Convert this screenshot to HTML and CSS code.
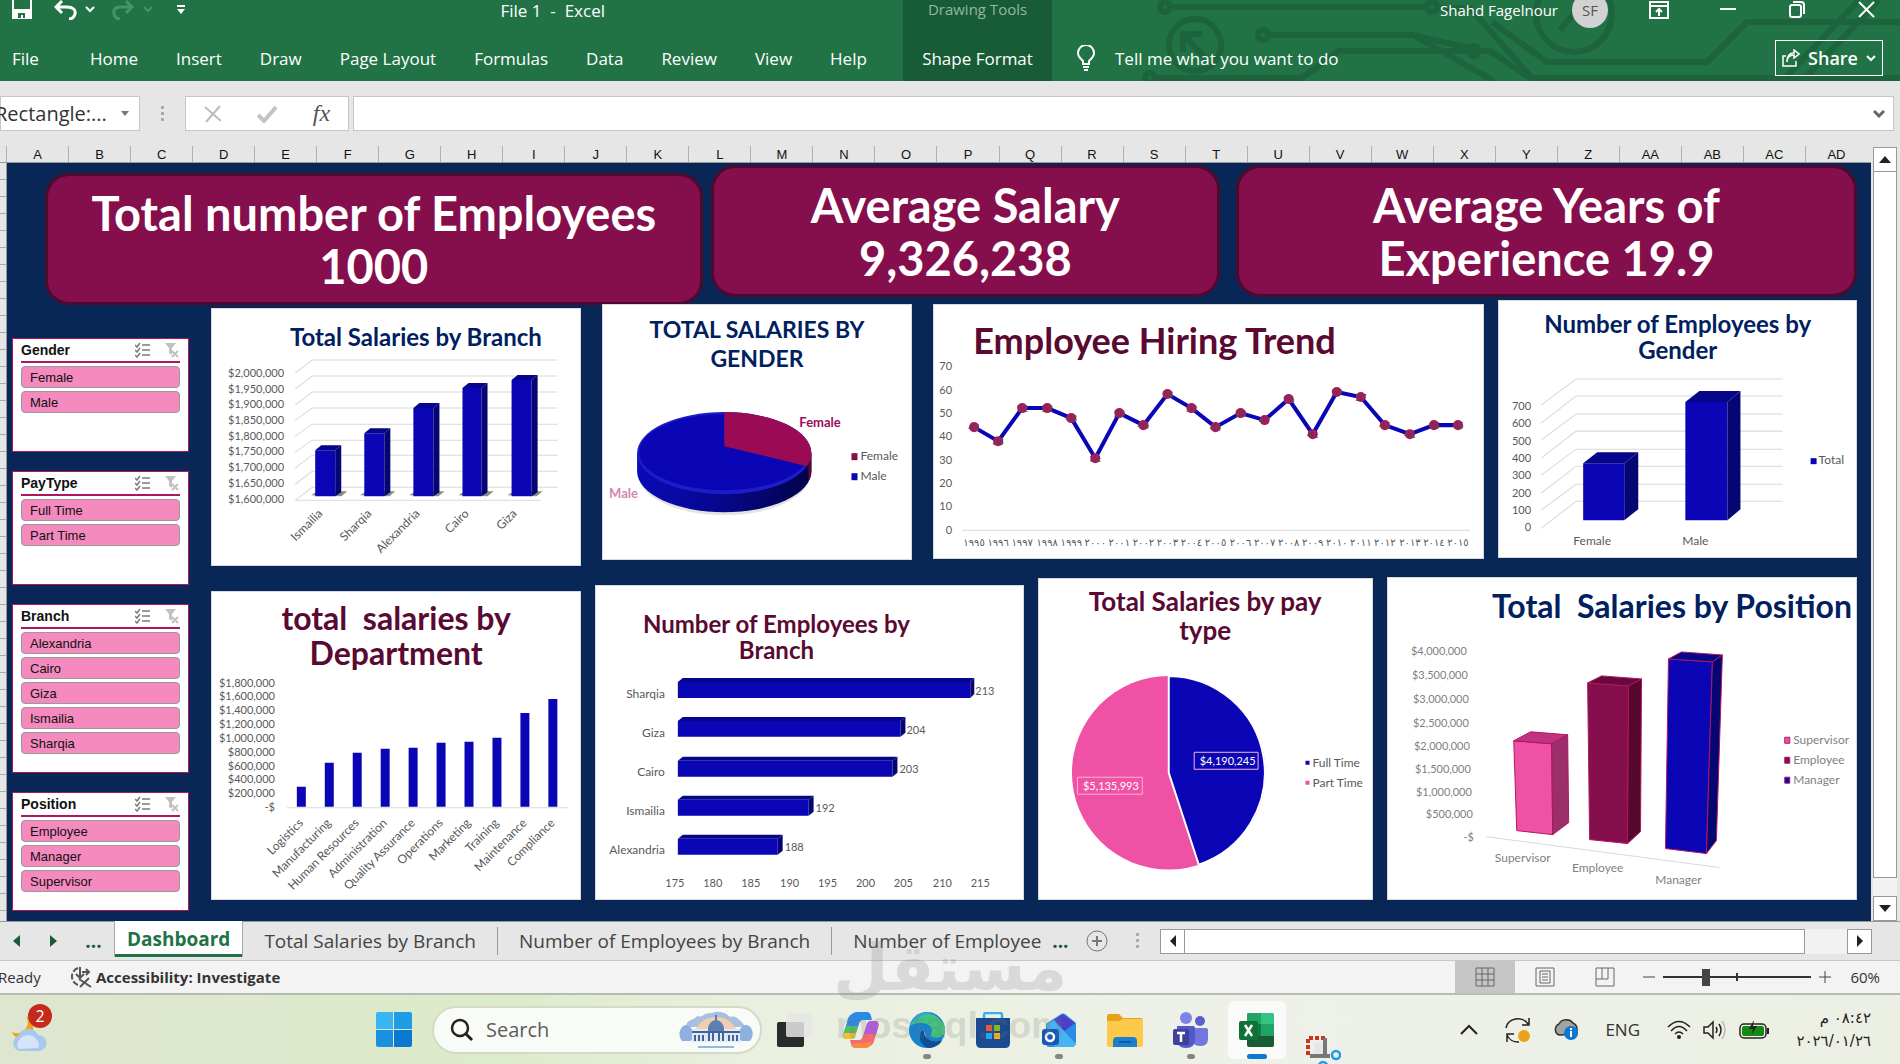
FILE: index.html
```html
<!DOCTYPE html>
<html lang="en">
<head>
<meta charset="UTF-8" />
<meta name="viewport" content="width=device-width, initial-scale=1" />
<title>File 1 - Excel</title>
<link rel="stylesheet" href="styles.css">
</head>
<body>

<!-- Title bar and ribbon tabs -->
<header class="ribbon">
  <div class="ribbon-left">
    <div class="title-row">
      <div class="quick">
        <button aria-label="Save"><svg width="20" height="20" viewBox="0 0 20 20"><path d="M1 0V18H19V0M1 10H19" fill="none" stroke="#fff" stroke-width="2"/><path d="M1 11H19V18H1Z" fill="#fff"/><path d="M6 13H13V18H11V15H9V18H6Z" fill="#217346"/></svg></button>
        <button class="undo" aria-label="Undo"><svg width="42" height="20" viewBox="0 0 42 20"><path d="M8 1L2 7L8 13M2 7H13C19 7 22 10 21 14C20 17 18 19 15 19" fill="none" stroke="#fff" stroke-width="3"/><path d="M32 7L36 11L40 7" fill="none" stroke="#fff" stroke-width="2"/></svg></button>
        <button class="redo" aria-label="Redo"><svg width="42" height="20" viewBox="0 0 42 20"><path d="M14 1L20 7L14 13M20 7H9C3 7 1 10 2 14C3 17 5 19 8 19" fill="none" stroke="#439467" stroke-width="3"/><path d="M32 7L36 11L40 7" fill="none" stroke="#439467" stroke-width="2"/></svg></button>
        <button class="more" aria-label="Customize Quick Access Toolbar"><svg width="10" height="10" viewBox="0 0 10 10"><path d="M1 1H9" stroke="#fff" stroke-width="2"/><path d="M1 4H9L5 9Z" fill="#fff"/></svg></button>
      </div>
      <span class="doc-title">File 1 &nbsp;- &nbsp;Excel</span>
    </div>
    <nav class="tabs">
      <button class="file">File</button>
      <button>Home</button>
      <button>Insert</button>
      <button>Draw</button>
      <button>Page Layout</button>
      <button>Formulas</button>
      <button>Data</button>
      <button>Review</button>
      <button>View</button>
      <button>Help</button>
    </nav>
  </div>
  <div class="ribbon-context">
    <span>Drawing Tools</span>
    <button>Shape Format</button>
  </div>
  <div class="ribbon-right">
    <svg class="circuit" viewBox="0 0 848 81" preserveAspectRatio="xMaxYMin slice">
      <g fill="none" stroke="#1d633b" stroke-width="6">
        <circle cx="113" cy="7" r="5"/><path d="M118 7H375"/><circle cx="380" cy="7" r="5"/>
        <path d="M385 8H418L480 78H848"/>
        <circle cx="211" cy="35" r="5"/><path d="M216 35H361L442 81M361 35L425 50"/>
        <path d="M440 22L495 62H655L695 22H848"/>
        <circle cx="98" cy="78" r="5"/><path d="M103 78H250L287 51H416"/><circle cx="422" cy="51" r="5"/><path d="M428 51H438L478 78"/>
        <path d="M730 81L807 0M750 81L827 0"/>
        <circle cx="143" cy="45" r="26"/><path d="M153 58L133 36M131 52V34H150"/>
        <circle cx="522" cy="14" r="38"/><path d="M508 30L540 -8"/>
      </g>
    </svg>
    <div class="title-row account">
      <span>Shahd Fagelnour</span>
      <span class="avatar">SF</span>
      <button aria-label="Ribbon Display Options"><svg width="20" height="18" viewBox="0 0 20 18"><path d="M1 1H19V17H1ZM1 5H19M10 15V8M7 11L10 8L13 11" fill="none" stroke="#fff" stroke-width="2"/></svg></button>
      <button aria-label="Minimize"><svg width="20" height="18" viewBox="0 0 20 18"><path d="M2 8H18" stroke="#fff" stroke-width="2"/></svg></button>
      <button aria-label="Restore Down"><svg width="20" height="18" viewBox="0 0 20 18"><path d="M3 6Q3 4 5 4H12Q14 4 14 6V14Q14 16 12 16H5Q3 16 3 14ZM6 1H14Q17 1 17 4V13" fill="none" stroke="#fff" stroke-width="2"/></svg></button>
      <button aria-label="Close"><svg width="20" height="18" viewBox="0 0 20 18"><path d="M3 1L18 16M18 1L3 16" stroke="#fff" stroke-width="2"/></svg></button>
    </div>
    <div class="tell-row">
      <button class="tell"><svg width="18" height="26" viewBox="0 0 18 26"><path d="M6 19V16C4 14 1 12 1 8A8 8 0 0 1 17 8C17 12 14 14 12 16V19ZM6 22H12M7 25H11" fill="none" stroke="#fff" stroke-width="2"/></svg>Tell me what you want to do</button>
      <button class="share"><svg width="18" height="18" viewBox="0 0 18 18"><path d="M4 7H1V17H14V12M5 13C5 8 8 6 12 6V9L17 5L12 1V4C7 4 5 8 5 13Z" fill="none" stroke="#fff" stroke-width="1.5"/></svg>Share<svg width="10" height="8" viewBox="0 0 10 8"><path d="M1 2L5 6L9 2" fill="none" stroke="#fff" stroke-width="2"/></svg></button>
    </div>
  </div>
</header>

<!-- Formula bar -->
<div class="formula-bar">
  <div class="name-box">
    <input type="text" aria-label="Name Box" value="Rectangle:...">
    <svg width="8" height="6" viewBox="0 0 8 6"><path d="M0 0H8L4 5Z" fill="#777"/></svg>
  </div>
  <span class="dots"></span>
  <div class="fx-box">
    <button aria-label="Cancel"><svg width="18" height="18" viewBox="0 0 18 18"><path d="M1 2L17 16M16 1L2 17" stroke="#bcbcbc" stroke-width="2"/></svg></button>
    <button aria-label="Enter"><svg width="20" height="18" viewBox="0 0 20 18"><path d="M1 10L7 16L19 2" fill="none" stroke="#c4c4c4" stroke-width="4"/></svg></button>
    <button class="fx" aria-label="Insert Function">fx</button>
  </div>
  <div class="formula-box">
    <input type="text" aria-label="Formula">
    <svg width="12" height="8" viewBox="0 0 12 8"><path d="M1 1L6 6L11 1" fill="none" stroke="#666" stroke-width="3"/></svg>
  </div>
</div>

<!-- Worksheet -->
<main class="sheet">
  <div class="grid-area">
    <div class="columns">
      <span>A</span><span>B</span><span>C</span><span>D</span><span>E</span><span>F</span><span>G</span><span>H</span><span>I</span><span>J</span><span>K</span><span>L</span><span>M</span><span>N</span><span>O</span><span>P</span><span>Q</span><span>R</span><span>S</span><span>T</span><span>U</span><span>V</span><span>W</span><span>X</span><span>Y</span><span>Z</span><span>AA</span><span>AB</span><span>AC</span><span>AD</span>
    </div>
    <div class="rows-and-canvas">
      <div class="row-gutter"></div>
      <div class="canvas">
        <div class="kpis">
          <div class="kpi kpi-employees">Total number of Employees<br>1000</div>
          <div class="kpi kpi-salary">Average Salary<br>9,326,238</div>
          <div class="kpi kpi-years">Average Years of<br>Experience 19.9</div>
        </div>

        <div class="board">
          <aside class="slicers">
            <section class="slicer roomy">
              <header><h3>Gender</h3><button aria-label="Multi-Select"><svg class="ic-multi" viewBox="0 0 16 16"><use href="#multi"/></svg></button><button aria-label="Clear Filter"><svg class="ic-clear" viewBox="0 0 16 16"><use href="#clear"/></svg></button></header>
              <button>Female</button>
              <button>Male</button>
            </section>
            <section class="slicer roomy">
              <header><h3>PayType</h3><button aria-label="Multi-Select"><svg class="ic-multi" viewBox="0 0 16 16"><use href="#multi"/></svg></button><button aria-label="Clear Filter"><svg class="ic-clear" viewBox="0 0 16 16"><use href="#clear"/></svg></button></header>
              <button>Full Time</button>
              <button>Part Time</button>
            </section>
            <section class="slicer">
              <header><h3>Branch</h3><button aria-label="Multi-Select"><svg class="ic-multi" viewBox="0 0 16 16"><use href="#multi"/></svg></button><button aria-label="Clear Filter"><svg class="ic-clear" viewBox="0 0 16 16"><use href="#clear"/></svg></button></header>
              <button>Alexandria</button>
              <button>Cairo</button>
              <button>Giza</button>
              <button>Ismailia</button>
              <button>Sharqia</button>
            </section>
            <section class="slicer">
              <header><h3>Position</h3><button aria-label="Multi-Select"><svg class="ic-multi" viewBox="0 0 16 16"><use href="#multi"/></svg></button><button aria-label="Clear Filter"><svg class="ic-clear" viewBox="0 0 16 16"><use href="#clear"/></svg></button></header>
              <button>Employee</button>
              <button>Manager</button>
              <button>Supervisor</button>
            </section>
          </aside>

          <div class="charts">
            <div class="chart-row top">
              <section class="card c-branch">
                <h2 class="navy">Total Salaries by Branch</h2>
                <svg viewBox="0 0 369 216">
                  <path class="grid" d="M84 23L101 10H346M84 39L101 26H346M84 55L101 42H346M84 70L101 58H346M84 86L101 74H346M84 102L101 90H346M84 118L101 105H346M84 134L101 121H346M84 150L101 137H346M84 150H329"/>
                  <g class="end num"><text x="73" y="27">$2,000,000</text><text x="73" y="43">$1,950,000</text><text x="73" y="58">$1,900,000</text><text x="73" y="74">$1,850,000</text><text x="73" y="90">$1,800,000</text><text x="73" y="105">$1,750,000</text><text x="73" y="121">$1,700,000</text><text x="73" y="137">$1,650,000</text><text x="73" y="153">$1,600,000</text></g>
                  <path fill="#8a8a80" d="M100 145L106 141H136L130 146ZM149 145L155 141H184L178 146ZM198 145L204 141H233L227 146ZM247 145L253 141H282L276 146ZM296 145L302 141H331L325 146Z"/>
                  <path class="bar" d="M104 100H124V146H104ZM153 83H173V146H153ZM202 58H222V146H202ZM251 38H270V146H251ZM300 30H320V146H300Z"/>
                  <path class="lid" d="M104 100L110 95H130L124 100ZM153 83L159 78H179L173 83ZM202 58L208 53H228L222 58ZM251 38L257 33H276L270 38ZM300 30L306 25H326L320 30Z"/>
                  <path class="side" d="M124 100L130 95V142L124 146ZM173 83L179 78V142L173 146ZM222 58L228 53V142L222 146ZM270 38L276 33V142L270 146ZM320 30L326 25V142L320 146Z"/>
                  <g class="end tilt"><text transform="translate(112 164) rotate(-45)">Ismailia</text><text transform="translate(161 164) rotate(-45)">Sharqia</text><text transform="translate(209 164) rotate(-45)">Alexandria</text><text transform="translate(258 164) rotate(-45)">Cairo</text><text transform="translate(306 164) rotate(-45)">Giza</text></g>
                </svg>
              </section>

              <section class="card c-gender-pie">
                <h2 class="navy">TOTAL SALARIES BY<br>GENDER</h2>
                <svg viewBox="0 0 310 187">
                  <defs><linearGradient id="rim"><stop offset="0" stop-color="#0a0ab8"/><stop offset=".5" stop-color="#07078a"/><stop offset="1" stop-color="#020248"/></linearGradient></defs>
                  <ellipse cx="122" cy="101" rx="86" ry="41" fill="#e4e4e4"/>
                  <path fill="url(#rim)" d="M35 80V98A87 41 0 0 0 209 98V80Z"/>
                  <path fill="#5f0736" d="M209 80V98Q209 104 206 108V92Z"/>
                  <ellipse cx="122" cy="80" rx="87" ry="41" fill="#1c1cc8"/>
                  <ellipse cx="122" cy="79" rx="85" ry="38" fill="#0a06b5"/>
                  <path fill="#9b0b55" d="M122 73V39A87 41 0 0 1 209 80Q209 87 204 93Z"/>
                  <text x="197" y="54" class="strong">Female</text>
                  <text x="7" y="125" class="strong faded">Male</text>
                  <path fill="#850e4c" d="M249 80H255V87H249Z"/><text x="258" y="87">Female</text>
                  <path fill="#0a06b5" d="M249 100H255V107H249Z"/><text x="258" y="107">Male</text>
                </svg>
              </section>

              <section class="card c-trend">
                <h2 class="plum">Employee Hiring Trend</h2>
                <svg viewBox="0 0 550 199">
                  <g class="end num"><text x="19" y="10">70</text><text x="19" y="34">60</text><text x="19" y="57">50</text><text x="19" y="80">40</text><text x="19" y="104">30</text><text x="19" y="127">20</text><text x="19" y="150">10</text><text x="19" y="174">0</text></g>
                  <path class="grid" d="M29 170H536"/>
                  <polyline fill="none" stroke="#0a06b5" stroke-width="4" points="41,67 65,81 89,48 114,48 138,58 162,98 186,53 210,65 234,34 258,48 282,67 307,53 331,60 355,39 379,74 403,32 427,37 451,65 476,74 500,65 524,65"/>
                  <g fill="#b01560"><circle cx="41" cy="67" r="5"/><circle cx="65" cy="81" r="5"/><circle cx="89" cy="48" r="5"/><circle cx="114" cy="48" r="5"/><circle cx="138" cy="58" r="5"/><circle cx="162" cy="98" r="5"/><circle cx="186" cy="53" r="5"/><circle cx="210" cy="65" r="5"/><circle cx="234" cy="34" r="5"/><circle cx="258" cy="48" r="5"/><circle cx="282" cy="67" r="5"/><circle cx="307" cy="53" r="5"/><circle cx="331" cy="60" r="5"/><circle cx="355" cy="39" r="5"/><circle cx="379" cy="74" r="5"/><circle cx="403" cy="32" r="5"/><circle cx="427" cy="37" r="5"/><circle cx="451" cy="65" r="5"/><circle cx="476" cy="74" r="5"/><circle cx="500" cy="65" r="5"/><circle cx="524" cy="65" r="5"/></g>
                  <g class="mid point"><text x="41" y="71">44</text><text x="65" y="85">38</text><text x="89" y="52">52</text><text x="114" y="52">52</text><text x="138" y="62">48</text><text x="162" y="102">31</text><text x="186" y="57">50</text><text x="210" y="69">45</text><text x="234" y="38">58</text><text x="258" y="52">52</text><text x="282" y="71">44</text><text x="307" y="57">50</text><text x="331" y="64">47</text><text x="355" y="43">56</text><text x="379" y="78">41</text><text x="403" y="36">59</text><text x="427" y="41">57</text><text x="451" y="69">45</text><text x="476" y="78">41</text><text x="500" y="69">45</text><text x="524" y="69">45</text></g>
                  <g class="mid years"><text x="41" y="186">١٩٩٥</text><text x="65" y="186">١٩٩٦</text><text x="89" y="186">١٩٩٧</text><text x="114" y="186">١٩٩٨</text><text x="138" y="186">١٩٩٩</text><text x="162" y="186">٢٠٠٠</text><text x="186" y="186">٢٠٠١</text><text x="210" y="186">٢٠٠٢</text><text x="234" y="186">٢٠٠٣</text><text x="258" y="186">٢٠٠٤</text><text x="282" y="186">٢٠٠٥</text><text x="307" y="186">٢٠٠٦</text><text x="331" y="186">٢٠٠٧</text><text x="355" y="186">٢٠٠٨</text><text x="379" y="186">٢٠٠٩</text><text x="403" y="186">٢٠١٠</text><text x="427" y="186">٢٠١١</text><text x="451" y="186">٢٠١٢</text><text x="476" y="186">٢٠١٣</text><text x="500" y="186">٢٠١٤</text><text x="524" y="186">٢٠١٥</text></g>
                </svg>
              </section>

              <section class="card c-gender-count">
                <h2 class="navy">Number of Employees by<br>Gender</h2>
                <svg viewBox="0 0 358 195">
                  <path class="grid" d="M43 42L78 16H284M43 60L78 33H284M43 77L78 51H284M43 95L78 68H284M43 112L78 86H284M43 130L78 103H284M43 147L78 121H284M43 165L78 138H284"/>
                  <g class="end num"><text x="33" y="47">700</text><text x="33" y="64">600</text><text x="33" y="82">500</text><text x="33" y="99">400</text><text x="33" y="116">300</text><text x="33" y="134">200</text><text x="33" y="151">100</text><text x="33" y="168">0</text></g>
                  <path class="bar" d="M85 100H126V157H85ZM187 39H229V157H187Z"/>
                  <path class="lid" d="M85 100L99 89H140L126 100ZM187 39L201 28H242L229 39Z"/>
                  <path class="side" d="M126 100L140 89V146L126 157ZM229 39L242 28V146L229 157Z"/>
                  <g class="mid"><text x="94" y="182">Female</text><text x="197" y="182">Male</text></g>
                  <path class="bar" d="M312 95H318V101H312Z"/><text x="320" y="101">Total</text>
                </svg>
              </section>
            </div>

            <div class="chart-row bottom">
              <section class="card c-department">
                <h2 class="plum">total &nbsp;salaries by<br>Department</h2>
                <svg viewBox="0 0 371 230">
                  <g class="end num"><text x="64" y="17">$1,800,000</text><text x="64" y="30">$1,600,000</text><text x="64" y="44">$1,400,000</text><text x="64" y="58">$1,200,000</text><text x="64" y="72">$1,000,000</text><text x="64" y="86">$800,000</text><text x="64" y="100">$600,000</text><text x="64" y="113">$400,000</text><text x="64" y="127">$200,000</text><text x="64" y="141">-$</text></g>
                  <path class="grid" d="M76 138H357"/>
                  <path class="bar" d="M86 117h9V137h-9ZM114 93h9V137h-9ZM142 83h9V137h-9ZM170 79h9V137h-9ZM198 78h9V137h-9ZM226 73h9V137h-9ZM254 72h9V137h-9ZM282 68h9V137h-9ZM310 43h9V137h-9ZM338 29h9V137h-9Z"/>
                  <g class="end tilt"><text transform="translate(93 154) rotate(-45)">Logistics</text><text transform="translate(121 154) rotate(-45)">Manufacturing</text><text transform="translate(149 154) rotate(-45)">Human Resources</text><text transform="translate(177 154) rotate(-45)">Administration</text><text transform="translate(205 154) rotate(-45)">Quality Assurance</text><text transform="translate(233 154) rotate(-45)">Operations</text><text transform="translate(261 154) rotate(-45)">Marketing</text><text transform="translate(289 154) rotate(-45)">Training</text><text transform="translate(317 154) rotate(-45)">Maintenance</text><text transform="translate(345 154) rotate(-45)">Compliance</text></g>
                </svg>
              </section>

              <section class="card c-branch-count">
                <h2 class="plum">Number of Employees by<br>Branch</h2>
                <svg viewBox="0 0 429 237">
                  <g class="end"><text x="70" y="35">Sharqia</text><text x="70" y="74">Giza</text><text x="70" y="113">Cairo</text><text x="70" y="152">Ismailia</text><text x="70" y="191">Alexandria</text></g>
                  <path class="bar" d="M83 19H376V35H83ZM83 58H306V74H83ZM83 98H298V114H83ZM83 137H214V153H83ZM83 176H183V192H83Z"/>
                  <path class="lid" d="M83 19L88 15H380L376 19ZM83 58L88 54H311L306 58ZM83 98L88 94H303L298 98ZM83 137L88 133H219L214 137ZM83 176L88 172H188L183 176Z"/>
                  <path class="side" d="M376 19L380 15V31L376 35ZM306 58L311 54V70L306 74ZM298 98L303 94V110L298 114ZM214 137L219 133V149L214 153ZM183 176L188 172V188L183 192Z"/>
                  <g class="num"><text x="381" y="32">213</text><text x="312" y="71">204</text><text x="305" y="110">203</text><text x="221" y="149">192</text><text x="190" y="188">188</text></g>
                  <g class="mid num"><text x="80" y="224">175</text><text x="118" y="224">180</text><text x="156" y="224">185</text><text x="195" y="224">190</text><text x="233" y="224">195</text><text x="271" y="224">200</text><text x="309" y="224">205</text><text x="348" y="224">210</text><text x="386" y="224">215</text></g>
                </svg>
              </section>

              <section class="card c-paytype">
                <h2 class="plum">Total Salaries by pay<br>type</h2>
                <svg viewBox="0 0 336 255">
                  <circle cx="131" cy="128" r="97" fill="#ef52a4"/>
                  <path fill="#0a06b5" stroke="#fff" stroke-width="2" d="M131 128V31A97 97 0 0 1 161 220Z"/>
                  <path fill="none" stroke="#f7b4d8" d="M156.5 107.5H220.5V124.5H156.5ZM39.500 132.500H104.500V149.500H39.500Z"/>
                  <g class="mid num white"><text x="190" y="120">$4,190,245</text><text x="73" y="145">$5,135,993</text></g>
                  <path fill="#0a06b5" d="M268 116H272V120H268Z"/><text x="275" y="122">Full Time</text>
                  <path fill="#ef52a4" d="M268 136H272V140H268Z"/><text x="275" y="142">Part Time</text>
                </svg>
              </section>

              <section class="card c-position">
                <h2 class="navy">Total &nbsp;Salaries by Position</h2>
                <svg viewBox="0 0 471 276" class="soft">
                  <g class="end num"><text x="80" y="31">$4,000,000</text><text x="81" y="55">$3,500,000</text><text x="82" y="79">$3,000,000</text><text x="82" y="103">$2,500,000</text><text x="83" y="126">$2,000,000</text><text x="84" y="149">$1,500,000</text><text x="85" y="172">$1,000,000</text><text x="86" y="194">$500,000</text><text x="87" y="217">-$</text></g>
                  <path class="grid" d="M99 213L333 244"/>
                  <g stroke="#b01560" stroke-linejoin="round">
                    <path fill="#ef52a4" d="M127 117L165 120L166 211L130 207Z"/><path fill="#c2337f" d="M127 117L144 108L181 111L165 120Z"/><path fill="#9c2f6b" d="M165 120L181 111L182 199L166 211Z"/>
                    <path fill="#850e4c" d="M201 59L242 62L241 220L203 216Z"/><path fill="#650a3a" d="M201 59L215 52L255 55L242 62Z"/><path fill="#56082f" d="M242 62L255 55L254 208L241 220Z"/>
                    <path fill="#0a06b5" d="M282 35L326 38L320 230L279 225Z"/><path fill="#06068a" d="M282 35L295 28L336 31L326 38Z"/><path fill="#050573" d="M326 38L336 31L330 217L320 230Z"/>
                  </g>
                  <g class="mid"><text x="136" y="238">Supervisor</text><text x="211" y="248">Employee</text><text x="292" y="260">Manager</text></g>
                  <g stroke="#b01560"><path fill="#ef52a4" d="M398.500 113.500h5v6h-5Z"/><path fill="#850e4c" d="M398.500 133.500h5v6h-5Z"/><path fill="#0a06b5" d="M398.500 153.500h5v6h-5Z"/></g>
                  <text x="407" y="120">Supervisor</text><text x="407" y="140">Employee</text><text x="407" y="160">Manager</text>
                </svg>
              </section>
            </div>
          </div>
        </div>
      </div>
    </div>
  </div>
  <div class="vscroll">
    <button aria-label="Scroll up"><svg width="12" height="7" viewBox="0 0 12 7"><path d="M0 7L6 0L12 7Z" fill="#222"/></svg></button>
    <div class="vthumb"></div>
    <div class="vtrack"></div>
    <button aria-label="Scroll down"><svg width="12" height="7" viewBox="0 0 12 7"><path d="M0 0L6 7L12 0Z" fill="#222"/></svg></button>
  </div>
</main>

<!-- Sheet tabs -->
<div class="sheet-tabs">
  <button class="arrow" aria-label="Previous sheet"><svg width="7" height="12" viewBox="0 0 7 12"><path d="M7 0L0 6L7 12Z" fill="#185c37"/></svg></button>
  <button class="arrow" aria-label="Next sheet"><svg width="7" height="12" viewBox="0 0 7 12"><path d="M0 0L7 6L0 12Z" fill="#185c37"/></svg></button>
  <button class="ellipsis">...</button>
  <button class="tab active">Dashboard</button>
  <button class="tab">Total Salaries by Branch</button>
  <button class="tab">Number of Employees by Branch</button>
  <button class="tab last">Number of Employee</button>
  <button class="ellipsis after">...</button>
  <button class="add" aria-label="New sheet"><svg width="22" height="22" viewBox="0 0 22 22"><path d="M11 6V16M6 11H16" stroke="#777" stroke-width="2"/><circle cx="11" cy="11" r="10" fill="none" stroke="#777"/></svg></button>
  <span class="dots"></span>
  <div class="hscroll">
    <button aria-label="Scroll left"><svg width="6" height="12" viewBox="0 0 6 12"><path d="M6 0L0 6L6 12Z" fill="#222"/></svg></button>
    <div class="hthumb"></div>
    <div class="htrack"></div>
    <button aria-label="Scroll right"><svg width="6" height="12" viewBox="0 0 6 12"><path d="M0 0L6 6L0 12Z" fill="#222"/></svg></button>
  </div>
</div>

<!-- Status bar -->
<div class="status">
  <span class="ready">Ready</span>
  <button class="access"><svg width="22" height="22" viewBox="0 0 22 22"><path d="M8 2A9 9 0 0 0 8 19" fill="none" stroke="#555" stroke-width="2" stroke-dasharray="6 2"/><path d="M10 1V11M6 8L10 12L14 8M12 6H19M16 3L19 6L16 9M9 13L21 21M19 12L10 21" fill="none" stroke="#555" stroke-width="2"/></svg>Accessibility: Investigate</button>
  <div class="views">
    <button class="on" aria-label="Normal"><svg width="20" height="20" viewBox="0 0 20 20"><path d="M1 1H19V19H1ZM1 7H19M1 13H19M7 1V19M13 1V19" fill="none" stroke="#666"/></svg></button>
    <button aria-label="Page Layout"><svg width="20" height="20" viewBox="0 0 20 20"><path d="M1 1H19V19H1ZM5 4H15V16H5ZM7 7H13M7 10H13M7 13H13" fill="none" stroke="#666"/></svg></button>
    <button aria-label="Page Break Preview"><svg width="20" height="20" viewBox="0 0 20 20"><path d="M1 1H19V19H1ZM1 12H13V1M7 1V12" fill="none" stroke="#666"/></svg></button>
  </div>
  <button class="zoom-step" aria-label="Zoom out"><svg width="12" height="12" viewBox="0 0 12 12"><path d="M0 6H12" stroke="#444"/></svg></button>
  <input class="zoom" type="range" aria-label="Zoom" min="10" max="190" value="60">
  <button class="zoom-step" aria-label="Zoom in"><svg width="12" height="12" viewBox="0 0 12 12"><path d="M0 6H12M6 0V12" stroke="#444"/></svg></button>
  <span class="percent">60%</span>
</div>

<!-- Taskbar -->
<footer class="taskbar">
  <button class="weather" aria-label="Weather">
    <svg width="38" height="44" viewBox="0 0 38 44"><path d="M16 8A11 11 0 0 1 2 24C4 30 12 33 19 29C26 24 24 12 16 8Z" fill="#f2a21c"/><path d="M9 43A8 8 0 0 1 8 28A11 11 0 0 1 28 27A8 8 0 0 1 29 43Z" fill="#a9c8ef"/><path d="M9 41A7 7 0 0 1 10 31A10 10 0 0 1 26 31A7 7 0 0 1 28 40Z" fill="#d5e4f8"/></svg>
    <span class="badge">2</span>
  </button>
  <div class="apps">
    <button aria-label="Start"><svg width="36" height="36" viewBox="0 0 36 36"><path d="M0 2Q0 0 2 0H17V17H0Z" fill="#38b6f3"/><path d="M18 0H34Q36 0 36 2V17H18Z" fill="#1f9ce8"/><path d="M0 18H17V35H2Q0 35 0 33Z" fill="#1a90e0"/><path d="M18 18H36V33Q36 35 34 35H18Z" fill="#0b78d2"/></svg></button>
    <label class="search">
      <svg width="24" height="24" viewBox="0 0 24 24"><circle cx="10" cy="10" r="8" fill="none" stroke="#222" stroke-width="2.500"/><path d="M16 16L22 22" stroke="#222" stroke-width="3"/></svg>
      <input type="text" placeholder="Search" aria-label="Search">
      <svg width="76" height="38" viewBox="0 0 76 38"><path d="M8 16C8 8 16 10 19 5C25 7 26 1 34 2C42-1 48 2 52 6C59 4 62 10 68 16Z" fill="#a9bfe0"/><path d="M17 24A21 18 0 0 1 59 24Z" fill="#f2cdb0"/><path d="M4 30C-2 22 4 14 8 14C13 14 18 22 13 30ZM63 30C58 22 63 14 68 14C73 14 78 22 72 30Z" fill="#8fb0de"/><path d="M14 18H62V31H14Z" fill="#dfe8f5"/><path d="M30 18A8 9 0 0 1 46 18V22H30ZM37 4H39V10H37Z" fill="#5b7fb5"/><path d="M14 21H62M17 24V30M21 24V30M25 24V30M31 22V30M35 22V30M41 22V30M45 22V30M51 24V30M55 24V30M59 24V30" stroke="#3f639c" stroke-width="2"/><path d="M4 31H72L60 35H16Z" fill="#f7fafd"/><path d="M20 36H56" stroke="#93b7df" stroke-width="2"/></svg>
    </label>
    <button aria-label="Task View"><svg width="36" height="36" viewBox="0 0 36 36"><rect x="0" y="10" width="27" height="25" rx="2" fill="#2b2b2b"/><rect x="9" y="1" width="26" height="24" rx="2" fill="#e6e6e6" fill-opacity=".85"/></svg></button>
    <button aria-label="Copilot"><svg width="36" height="36" viewBox="0 0 36 36"><path d="M9 2Q11 0 14 0H24Q27 0 28 4L29 8H20Q17 8 16 12L12 24Q11 27 8 27H4Q-1 27 1 20L5 7Q6 3 9 2Z" fill="#2a8be6"/><path d="M3 14L1 20Q-1 27 4 27H8Q11 27 12 24L15 14Z" fill="#57bd65"/><path d="M1 21Q-1 27 4 27H8Q11 27 12 24L13 21Z" fill="#f4c02c"/><path d="M27 34Q25 36 22 36H13Q9 36 8 32L7 28H16Q19 28 20 24L24 12Q25 9 28 9H32Q37 9 35 16L31 29Q30 33 27 34Z" fill="#f46a72"/><path d="M33 22L35 16Q37 9 32 9H28Q25 9 24 12L21 22Z" fill="#b55be0"/><path d="M8 32Q9 36 13 36H22Q25 36 27 34L29 30Z" fill="#fa8b3c"/></svg></button>
    <button class="running" aria-label="Edge"><svg width="36" height="36" viewBox="0 0 36 36"><circle cx="18" cy="18" r="18" fill="#1482cf"/><path d="M1 14A18 18 0 0 1 36 18C36 25 29 27 23 25C21 24 22 22 23 20C24 12 12 7 1 14Z" fill="#3fc481"/><path d="M1 14A18 18 0 0 1 24 1C16 2 6 6 1 14Z" fill="#2baae8"/><path d="M14 17C10 20 11 30 20 33C26 34 31 31 33 28C25 31 17 28 16 22Z" fill="#e6eee6"/><path d="M14 17C8 23 11 35 21 36C27 35 32 32 33 28C25 31 16 28 15 20Z" fill="#0c4f96"/></svg></button>
    <button aria-label="Store"><svg width="36" height="36" viewBox="0 0 36 36"><path d="M9 7V3Q9 1 11 1H25Q27 1 27 3V7" fill="none" stroke="#35b2ee" stroke-width="2.500"/><path d="M1 6H35V31Q35 36 30 36H6Q1 36 1 31Z" fill="#1b4a90"/><path d="M11 13H17V19H11Z" fill="#f1562c"/><path d="M19 13H25V19H19Z" fill="#7fba22"/><path d="M11 21H17V27H11Z" fill="#29a5ef"/><path d="M19 21H25V27H19Z" fill="#fdb813"/></svg></button>
    <button class="running" aria-label="Outlook"><svg width="36" height="36" viewBox="0 0 36 36"><path d="M5 12L20 2Q22 1 24 2L35 11V30Q35 35 30 35H8Q5 35 5 31Z" fill="#2b8ce8"/><path d="M13 8L22 2L34 11L21 21Z" fill="#4a41c8"/><path d="M5 13L13 8L35 32Q34 35 30 35H14Z" fill="#47b4f2"/><rect x="1" y="17" width="17" height="16" rx="3" fill="#1559b4"/><circle cx="9" cy="25" r="4" fill="none" stroke="#fff" stroke-width="2.500"/></svg></button>
    <button aria-label="File Explorer"><svg width="36" height="36" viewBox="0 0 36 36"><path d="M0 4Q0 2 2 2H12L16 6H34Q36 6 36 8V20H0Z" fill="#e8a21a"/><path d="M0 9H12L16 7H36V33Q36 35 34 35H2Q0 35 0 33Z" fill="#fcca4a"/><path d="M6 35V29Q6 25 10 25H26Q30 25 30 29V35Z" fill="#1c7fcd"/><path d="M12 30H24" stroke="#0f5c9d" stroke-width="2"/></svg></button>
    <button class="running" aria-label="Teams"><svg width="36" height="36" viewBox="0 0 36 36"><circle cx="13" cy="6" r="6" fill="#7b83eb"/><circle cx="27" cy="9" r="5" fill="#5b5fd0"/><path d="M19 16H33Q35 16 35 18V27Q35 34 28 34Q21 34 19 30Z" fill="#7277de"/><path d="M4 14H20Q22 14 22 16V27Q22 36 13 36Q4 36 4 27Z" fill="#5059c9"/><rect x="0" y="17" width="16" height="16" rx="2" fill="#3f3f9e"/><path d="M4 21H12M8 21V30" stroke="#fff" stroke-width="2.500"/></svg></button>
    <button class="current" aria-label="Excel"><svg width="36" height="36" viewBox="0 0 36 36"><path d="M8 2Q8 1 10 1H22V12H8Z" fill="#21a366"/><path d="M22 1H34Q35 1 35 3V12H22Z" fill="#33c481"/><path d="M8 12H22V24H8Z" fill="#107c41"/><path d="M22 12H35V24H22Z" fill="#21a366"/><path d="M8 24H35V33Q35 35 33 35H10Q8 35 8 33Z" fill="#185c37"/><rect x="0" y="9" width="19" height="19" rx="2" fill="#0f7038"/><path d="M6 13L13 24M13 13L6 24" stroke="#fff" stroke-width="2.500"/></svg></button>
    <button class="snip" aria-label="Snipping Tool"><svg width="36" height="36" viewBox="0 0 36 36"><path d="M3 22V5H20" fill="none" stroke="#d3311f" stroke-width="4" stroke-dasharray="4 2"/><path d="M9 10H20V22H9Z" fill="#e6e6e6"/><path d="M20 5V22M5 23H25" stroke="#777" stroke-width="4"/><circle cx="31" cy="22" r="4" fill="none" stroke="#1f9ce8" stroke-width="2.500"/><circle cx="18" cy="33" r="4" fill="none" stroke="#1f9ce8" stroke-width="2.500"/></svg></button>
  </div>
  <div class="tray">
    <button aria-label="Show hidden icons"><svg width="18" height="12" viewBox="0 0 18 12"><path d="M1 10L9 2L17 10" fill="none" stroke="#222" stroke-width="2"/></svg></button>
    <button class="sync" aria-label="Updates"><svg width="26" height="26" viewBox="0 0 26 26"><path d="M1 11A12 11 0 0 1 23 7M24 1V8H17M2 25V17H9M2 18A12 11 0 0 0 14 25" fill="none" stroke="#222" stroke-width="1.500"/><circle cx="19" cy="19" r="6" fill="#eca31c"/></svg></button>
    <button class="cloud" aria-label="OneDrive"><svg width="26" height="24" viewBox="0 0 26 24"><path d="M6 17A6 6 0 0 1 6 6A8 7 0 0 1 20 5Q24 7 24 11V16Z" fill="#a3a3a3" stroke="#333" stroke-width="1.500"/><circle cx="18" cy="15" r="7" fill="#0b78d2"/><path d="M18 13V19M18 10V12" stroke="#fff" stroke-width="2"/></svg></button>
    <span class="lang">ENG</span>
    <button class="net" aria-label="Network, volume and battery">
      <svg width="24" height="20" viewBox="0 0 24 20"><path d="M1 7Q12-4 23 7M4 11Q12 2 20 11M8 14Q12 10 16 14" fill="none" stroke="#222" stroke-width="1.500"/><circle cx="12" cy="17" r="2" fill="#222"/></svg>
      <svg width="24" height="20" viewBox="0 0 24 20"><path d="M1 7H5L10 2V18L5 13H1Z" fill="none" stroke="#222" stroke-width="1.500"/><path d="M13 7Q15 10 13 13M16 4Q20 10 16 16" fill="none" stroke="#222" stroke-width="1.500"/><path d="M19 1Q25 10 19 19" fill="none" stroke="#bbb" stroke-width="1.500"/></svg>
      <svg width="30" height="20" viewBox="0 0 30 20"><rect x="1" y="4" width="26" height="14" rx="4" fill="none" stroke="#222" stroke-width="1.500"/><rect x="3" y="6" width="22" height="10" rx="2" fill="#138a13"/><path d="M29 8V14" stroke="#222" stroke-width="2"/><path d="M15 0L10 9H14L13 14L18 6H14Z" fill="#222"/></svg>
    </button>
    <div class="clock"><span dir="rtl">٠٨:٤٢ م</span><span>٢٠٢٦/٠١/٢٦</span></div>
  </div>
</footer>

<div class="watermark"><span lang="ar">مستقل</span><span>mostaql.com</span></div>

<!-- Slicer icons -->
<svg class="defs" width="0" height="0">
  <symbol id="multi" viewBox="0 0 16 16"><path d="M7 3H15M7 8H15M7 13H15M0 3L2 5L5 1M0 8L2 10L5 6M0 13L2 15L5 11" fill="none" stroke="#7a7a7a" stroke-width="1.500"/></symbol>
  <symbol id="clear" viewBox="0 0 16 16"><path d="M1 1H12L8 6V13L5 11V6Z" fill="#c4c0c2"/><path d="M8 9L14 15M14 9L8 15" stroke="#c4c0c2" stroke-width="2"/></symbol>
</svg>

</body>
</html>
```

FILE: styles.css
```css
* {
  margin: 0; padding: 0; box-sizing: border-box;
}
body {
  display: flex;
  flex-direction: column;
  min-height: 100vh;
  background: #e6e6e6;
  font-family: "Open Sans", "Noto Sans", sans-serif;
  font-size: 17px;
  color: #333;
  overflow: hidden;
}
button, input {
  font: inherit;
  color: inherit;
  background: none;
  border: none;
  outline: none;
}
button {
  cursor: pointer;
  display: flex;
  align-items: center;
  justify-content: center;
  white-space: nowrap;
}
svg { display: block; flex-shrink: 0; }
.defs { position: absolute; }

/* Ribbon */
.ribbon {
  display: flex;
  height: 81px;
  background: #217346;
  color: #fff;
}
.ribbon-left, .ribbon-context, .ribbon-right {
  display: flex;
  flex-direction: column;
  justify-content: space-between;
}
.ribbon-left { flex: 0 0 903px; }
.title-row {
  display: flex;
  align-items: center;
  justify-content: space-between;
  height: 20px;
  white-space: nowrap;
}
.quick { display: flex; align-items: center; padding-left: 12px; }
.undo { margin-left: 22px; }
.redo { margin-left: 16px; }
.more { margin-left: 22px; }
.doc-title { margin-right: 298px; }
.tabs { display: flex; height: 46px; padding-left: 12px; }
.tabs button { padding: 0 19px; }
.tabs .file { padding: 0 32px 0 0; }
.ribbon-context {
  flex: 0 0 149px;
  align-items: center;
  background: #185c37;
}
.ribbon-context span { color: #93b8a2; font-size: 15px; line-height: 18px; }
.ribbon-context button { height: 46px; }
.ribbon-right { flex: 1; position: relative; }
.circuit {
  position: absolute;
  inset: 0;
  width: 100%;
  height: 100%;
}
.account { justify-content: flex-end; position: relative; padding-right: 24px; font-size: 15px; }
.avatar {
  width: 36px;
  height: 36px;
  margin: 0 41px 0 14px;
  border-radius: 50%;
  background: #d2d2d2;
  color: #555;
  line-height: 36px;
  text-align: center;
}
.account button + button { margin-left: 49px; }
.tell-row {
  display: flex;
  align-items: center;
  justify-content: space-between;
  height: 46px;
  padding: 0 17px 0 25px;
  position: relative;
}
.tell { gap: 20px; }
.share {
  height: 36px;
  padding: 0 6px;
  gap: 8px;
  border: 1px solid #fff;
  font-size: 18px;
  font-weight: 600;
}

/* Formula bar */
.formula-bar {
  display: flex;
  align-items: center;
  height: 65px;
  padding: 0 6px 0 0;
  font-size: 20px;
}
.name-box, .fx-box, .formula-box {
  display: flex;
  align-items: center;
  height: 35px;
  background: #fff;
  border: 1px solid #c6c6c6;
}
.name-box { width: 140px; padding-right: 10px; }
.name-box input { flex: 1; min-width: 0; margin-left: -6px; }
.dots {
  width: 3px;
  height: 16px;
  margin: 0 21px;
  background: repeating-linear-gradient(#aaa 0 3px, transparent 3px 6px);
}
.fx-box { width: 164px; justify-content: space-around; }
.fx { font: italic 24px "Liberation Serif", serif; color: #555; }
.formula-box { flex: 1; margin-left: 4px; padding-right: 8px; }
.formula-box input { flex: 1; }

/* Worksheet */
.sheet { flex: 1; display: flex; }
.grid-area { flex: 1; display: flex; flex-direction: column; }
.columns {
  display: flex;
  height: 17px;
  padding: 0 4px 0 6px;
  border-bottom: 1px solid #999;
  font: 13px/17px "Liberation Sans", sans-serif;
  color: #111;
  text-align: center;
}
.columns span { flex: 1 1 0; border-left: 1px solid #b0b0b0; }
.rows-and-canvas { flex: 1; display: flex; }
.row-gutter {
  width: 7px;
  border-right: 1px solid #999;
  background: repeating-linear-gradient(transparent 0 16px, #aaa 16px 17px);
}
.canvas {
  flex: 1;
  min-width: 0;
  padding: 2px 14px 8px 5px;
  background: #082757;
}
.kpis {
  display: flex;
  align-items: flex-start;
  gap: 8px;
  height: 135px;
  padding-left: 33px;
}
.kpi {
  display: flex;
  align-items: center;
  justify-content: center;
  height: 132px;
  padding-top: 2px;
  border: 3px solid #4c0a2e;
  border-radius: 24px;
  background: #850e4c;
  color: #fff;
  font: bold 47px/53px Lato, sans-serif;
  text-align: center;
}
.kpi-employees { flex: 658 1 0; margin-top: 8px; }
.kpi-salary { flex: 508 1 0; margin-right: 8px; }
.kpi-years { flex: 621 1 0; }

.board { display: flex; gap: 22px; }
.slicers {
  display: flex;
  flex-direction: column;
  flex: 0 0 177px;
  gap: 19px;
  margin-top: 38px;
}
.slicer {
  display: flex;
  flex-direction: column;
  gap: 3px;
  padding: 0 8px 18px;
  background: #fff;
  border: 1px solid #b01560;
  font: 13px "Liberation Sans", sans-serif;
  color: #111;
}
.slicer.roomy { padding-bottom: 38px; }
.slicer header {
  display: flex;
  align-items: center;
  height: 24px;
  border-bottom: 2px solid #b01560;
}
.slicer h3 { flex: 1; font-size: 14px; }
.slicer header button + button { margin-left: 13px; }
.ic-multi, .ic-clear { width: 16px; height: 16px; }
.slicer > button {
  justify-content: flex-start;
  height: 22px;
  padding-left: 8px;
  border: 1px solid #999;
  border-radius: 4px;
  background: #f48abd;
}

/* Charts */
.charts { flex: 1; min-width: 0; }
.chart-row { display: flex; gap: 14px; }
.chart-row.top { align-items: flex-start; }
.chart-row.bottom { align-items: flex-end; margin-top: 11px; }
.card {
  min-width: 0;
  background: #fff;
  box-shadow: inset 0 0 0 1px #d9d9d9;
}
.card svg { width: 100%; height: auto; overflow: visible; }
.card h2 {
  font: bold 24px/26px Lato, sans-serif;
  text-align: center;
  white-space: nowrap;
}
.card .navy { color: #002060; }
.card .plum { color: #5a0a32; }
.card text { font: 12px Lato, "DejaVu Sans", sans-serif; fill: #595959; }
.card .soft text { fill: #7f7f7f; }
.card .strong { font-size: 13px; font-weight: bold; fill: #9b0b55; }
.card .faded { fill: #d387ae; }
.card .end text { text-anchor: end; }
.card .mid text { text-anchor: middle; }
.card .num text { font-size: 11px; }
.card .white text { fill: #fff; }
.card .point text { font-size: 10px; fill: #4f4a4d; }
.card .years text { font: 10px "DejaVu Sans", sans-serif; }
.grid { fill: none; stroke: #d9d9d9; }
.bar { fill: #0a06b5; }
.lid { fill: #06068a; }
.side { fill: #050573; }

.c-branch { flex: 369 1 0; margin: 8px 7px 0 0; }
.c-branch h2 { padding: 16px 0 0 40px; }
.c-gender-pie { flex: 310 1 0; margin: 4px 7px 0 0; }
.c-gender-pie h2 { padding-top: 11px; font-size: 23px; line-height: 29px; }
.c-trend { flex: 550 1 0; margin-top: 4px; }
.c-trend h2 { padding: 16px 0 0 40px; font-size: 36px; line-height: 40px; text-align: left; }
.c-gender-count { flex: 358 1 0; }
.c-gender-count h2 { padding-top: 11px; }
.c-department { flex: 371 1 0; }
.c-department h2 { padding-top: 9px; font-size: 32px; line-height: 35px; }
.c-branch-count { flex: 429 1 0; }
.c-branch-count h2 { padding: 26px 66px 0 0; }
.c-paytype { flex: 336 1 0; }
.c-paytype h2 { padding-top: 9px; font-size: 26px; line-height: 29px; }
.c-position { flex: 471 1 0; }
.c-position h2 { padding: 11px 5px 0 0; font-size: 32px; line-height: 36px; text-align: right; }

/* Scroll bars */
.vscroll {
  display: flex;
  flex-direction: column;
  width: 24px;
  margin: 1px 3px 0 2px;
}
.vscroll button, .vthumb {
  height: 25px;
  background: #fff;
  border: 1px solid #999;
}
.vthumb { flex: 1; border-top: none; }
.vtrack { height: 18px; background: #f2f2f2; }

/* Sheet tabs */
.sheet-tabs {
  display: flex;
  align-items: center;
  height: 39px;
  padding-right: 28px;
  border-top: 1px solid #999;
  font-size: 19px;
  color: #444;
}
.arrow { width: 40px; }
.arrow:first-child { width: 33px; }
.ellipsis { width: 41px; font-weight: bold; color: #185c37; }
.tab { height: 28px; padding: 0 21px; border-right: 1px solid #999; }
.tab.active {
  align-self: flex-start;
  height: 36px;
  margin-top: -1px;
  padding: 0 12px;
  border: 1px solid #aaa;
  border-width: 0 1px;
  box-shadow: inset 0 -3px #217346;
  background: #fff;
  color: #217346;
  font-weight: bold;
}
.tab.last { border: none; padding-right: 0; }
.ellipsis.after { width: 38px; }
.add { width: 36px; }
.hscroll { flex: 1; display: flex; height: 25px; }
.hscroll button, .hthumb { width: 25px; background: #fff; border: 1px solid #999; }
.hthumb { flex: 1; border-left: none; }
.htrack { width: 42px; background: #f2f2f2; }

/* Status bar */
.status {
  display: flex;
  align-items: center;
  height: 35px;
  padding-right: 20px;
  background: #f3f3f3;
  border-top: 1px solid #c8c8c8;
  border-bottom: 2px solid #b7bbb3;
  font-size: 15px;
}
.ready { width: 72px; margin-left: -2px; }
.access { gap: 4px; font-weight: bold; }
.views { display: flex; align-self: stretch; margin-left: auto; }
.views button { width: 60px; }
.views .on { background: #c5c6c5; }
.zoom-step { width: 28px; }
.zoom {
  appearance: none;
  width: 148px;
  height: 18px;
  background:
    linear-gradient(#333, #333) center / 100% 2px no-repeat,
    linear-gradient(#333, #333) center / 2px 8px no-repeat;
}
.zoom::-webkit-slider-thumb {
  appearance: none;
  width: 8px;
  height: 17px;
  background: #444;
}
.percent { width: 41px; text-align: right; }

/* Taskbar */
.taskbar {
  display: flex;
  align-items: center;
  height: 69px;
  background: linear-gradient(to right, #dfe6d0, #dcebc9 26%, #eaf0e0 40%, #eef1e9 70%, #ecefe3);
}
.weather { position: relative; width: 50px; margin-left: 4px; }
.badge {
  position: absolute;
  left: 24px;
  top: -4px;
  width: 24px;
  height: 24px;
  border-radius: 50%;
  background: #c42b1c;
  color: #fff;
  font-size: 16px;
  line-height: 24px;
}
.apps { display: flex; align-items: center; height: 69px; margin-left: 307px; }
.apps button { position: relative; width: 66px; height: 58px; }
.search {
  display: flex;
  align-items: center;
  width: 330px;
  height: 48px;
  margin: 0 0 0 5px;
  padding: 0 6px 0 16px;
  border: 2px solid #d3dbc8;
  border-radius: 24px;
  background: #f9fbf6;
  font-size: 20px;
}
.search input { flex: 1; min-width: 0; margin-left: 12px; }
.search input::placeholder { color: #5c5c5c; }
.running::after, .current::after {
  content: "";
  position: absolute;
  bottom: 0;
  left: 29px;
  width: 8px;
  height: 5px;
  border-radius: 3px;
  background: #868686;
}
.apps .current { width: 58px; margin: 0 4px; border-radius: 6px; background: #fafbf8; }
.current::after { left: 19px; width: 20px; background: #0b78d2; }
.apps .snip { align-items: flex-start; padding-top: 38px; height: 69px; }
.tray { display: flex; align-items: center; margin-left: auto; padding-right: 29px; }
.sync { margin-left: 27px; }
.cloud { margin-left: 22px; }
.lang { margin: 0 27px 0 26px; font-size: 17px; }
.net { gap: 12px; }
.clock {
  display: flex;
  flex-direction: column;
  align-items: flex-end;
  width: 102px;
  font: 15px/23px "DejaVu Sans", sans-serif;
  color: #222;
}

.watermark {
  position: absolute;
  left: 44%;
  bottom: 16px;
  width: 12%;
  display: flex;
  flex-direction: column;
  align-items: center;
  color: #777;
  opacity: .2;
  font: bold 37px/44px "Liberation Sans", sans-serif;
  pointer-events: none;
}
.watermark span:first-child { font: bold 64px/72px "DejaVu Sans", sans-serif; }
```
